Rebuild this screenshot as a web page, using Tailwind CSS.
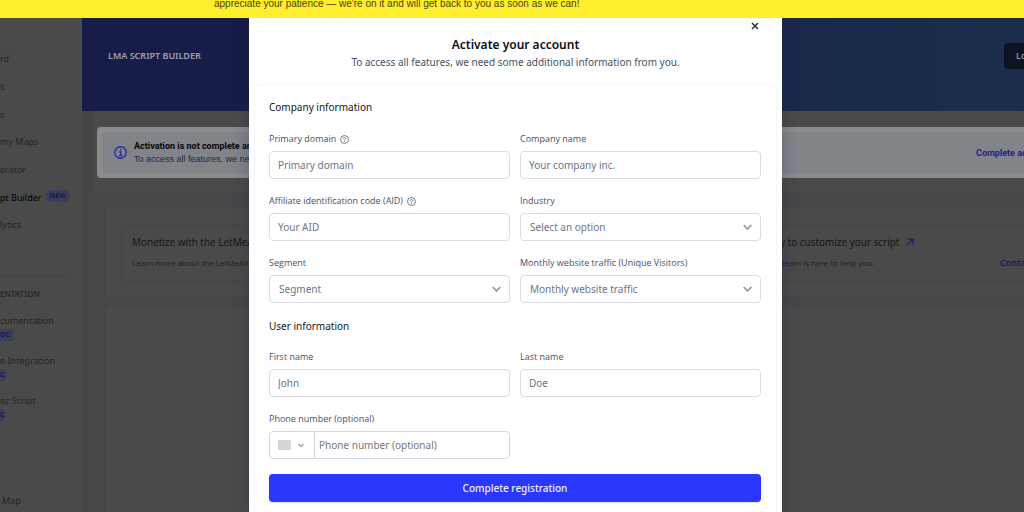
<!DOCTYPE html>
<html lang="en">
<head>
    <meta charset="UTF-8">
    <meta name="viewport" content="width=device-width, initial-scale=1.0">
    <title>LMA Script Builder</title>
    <script src="https://cdn.jsdelivr.net/npm/@tailwindcss/browser@4"></script>
</head>
<body class="h-screen overflow-hidden flex flex-col bg-[#464649] font-['Noto_Sans',sans-serif] text-[10px] leading-[14px]">

<!-- Announcement banner -->
<div class="h-[18px] shrink-0 flex items-end bg-[#ffee2b] pl-[214px] pb-[6px] overflow-hidden">
    <p class="font-['Liberation_Sans',sans-serif] text-[10px] leading-4 text-[#47421c] whitespace-nowrap">appreciate your patience — we're on it and will get back to you as soon as we can!</p>
</div>

<!-- Dimmed page behind the dialog -->
<div class="flex flex-1 min-h-0 overflow-hidden">
    <!-- Sidebar -->
    <nav class="w-[82px] shrink-0 overflow-hidden bg-[#4a4a4a] pt-[27px] text-[9px] text-[#242628] whitespace-nowrap">
        <a href="#" class="flex items-center h-7">rd</a>
        <a href="#" class="flex items-center h-7">s</a>
        <a href="#" class="flex items-center h-[27px]">s</a>
        <a href="#" class="flex items-center h-7">my Maps</a>
        <a href="#" class="flex items-center h-7">erator</a>
        <a href="#" class="flex items-center h-[27px] gap-1 text-black">pt Builder <span class="mb-1 px-1 rounded-full bg-[#3c3e55] text-[#14195e] text-[7px] leading-3 font-bold">NEW</span></a>
        <a href="#" class="flex items-center h-7">lytics</a>
        <hr class="mt-[37px] mr-4 border-[#434345]">
        <h2 class="mt-[10px] text-[8px] font-semibold">ENTATION</h2>
        <a href="#" class="block mt-[13px] h-10">cumentation
            <span class="block mt-px w-[14px] rounded-r bg-[#3c3e55] text-[#14195e] text-[7px] leading-3 font-bold">OC</span></a>
        <a href="#" class="block h-10">e Integration
            <span class="block mt-px w-[7px] rounded-r bg-[#3c3e55] text-[#14195e] text-[7px] leading-3 font-bold">C</span></a>
        <a href="#" class="block h-10">ez Script
            <span class="block mt-px w-[5px] rounded-r bg-[#3c3e55] text-[#14195e] text-[7px] leading-3 font-bold">C</span></a>
        <a href="#" class="block mt-[60px] pl-[2px]">Map</a>
    </nav>

    <main class="flex-1 min-w-0 flex flex-col overflow-hidden whitespace-nowrap font-['Open_Sans',sans-serif]">
        <header class="h-[93px] shrink-0 flex items-center justify-between pl-[26px] pb-[18px] bg-linear-to-r from-[#181c48] from-20% to-[#1b2e4b]">
            <h1 class="font-['Noto_Sans',sans-serif] text-[9px] font-semibold text-[#a0a0a8]">LMA SCRIPT BUILDER</h1>
            <button class="w-[60px] h-[26px] -mr-10 pl-3 rounded bg-[#0d1421] text-left text-[9px] font-semibold text-[#a0a0a8]">Log</button>
        </header>

        <!-- Activation notice -->
        <div class="h-[81px] shrink-0 ml-[13px] pl-[2px] py-4 bg-[#4a4a4a]">
            <section class="h-[51px] p-[5px] pr-0 rounded-l bg-[#8c8c8c] font-['Liberation_Sans',sans-serif]">
                <div class="h-[41px] flex items-center rounded-l bg-[#818489] pl-3">
                    <svg class="w-[13px] h-[13px] shrink-0" viewBox="0 0 13 13" fill="none" stroke="#262caf" stroke-width="1.4">
                        <circle cx="6.5" cy="6.5" r="5.7"/>
                        <path d="M5.2 6h1.5v3.4M5 9.5h3.2"/>
                        <path d="M6 3.8h1.3" stroke-width="1.5"/>
                    </svg>
                    <div class="flex-1 pl-[7px] leading-[13px] text-[9px]">
                        <p class="font-['Roboto',sans-serif] font-bold text-[#050508]">Activation is not complete and your</p>
                        <p class="text-[#252a4a]">To access all features, we need some</p>
                    </div>
                    <a href="#" class="w-12 font-['Roboto',sans-serif] font-bold text-[9px] text-[#1c2390]">Complete activation</a>
                </div>
            </section>
        </div>

        <!-- Help cards -->
        <section class="h-[88px] shrink-0 mt-4 ml-[25px] pt-4 pl-[14px] bg-[#4a4a4a]">
            <div class="h-[57px] flex justify-between rounded-l border border-r-0 border-[#454547] pl-[10px] pt-[9px]">
                <div>
                    <h2 class="text-[10px] leading-4 text-[#121316]">Monetize with the LetMeAllez</h2>
                    <p class="mt-[6px] text-[8px] text-[#202224]">Learn more about the LetMeAllez</p>
                </div>
                <div class="w-[244px]">
                    <h2 class="flex items-center gap-[7px] text-[10px] leading-4 text-[#121316]">y to customize your script
                        <svg class="w-2 h-2" viewBox="0 0 8 8" fill="none" stroke="#171c66" stroke-width="1.2"><path d="M.8 7.2 7 1M1.2 1H7v5.8"/></svg>
                    </h2>
                    <div class="mt-[6px] flex justify-between text-[8px]">
                        <p class="pl-[2px] text-[#202224]">team is here to help you.</p>
                        <a href="#" class="w-6 text-[9px] font-semibold text-[#14195e]">Contact</a>
                    </div>
                </div>
            </div>
        </section>
        <section class="flex-1 mt-[10px] ml-[25px] bg-[#4a4a4a]"></section>
    </main>
</div>

<!-- Activation dialog -->
<div class="absolute inset-x-0 top-[18px] bottom-0 pl-[7px] flex justify-center overflow-hidden">
    <div role="dialog" aria-labelledby="dialog-title" class="relative w-full max-w-[533px] self-start min-h-full px-[5px] bg-white shadow-[0_0_16px_rgba(30,30,80,0.3)]">
        <button aria-label="Close" class="absolute top-[4px] right-[23px] w-2 h-2">
            <svg viewBox="0 0 8 8" fill="none" stroke="#2b3346" stroke-width="1.6"><path d="m1 1 6 6M7 1 1 7"/></svg>
        </button>
        <div class="pt-[18px] h-[66px] text-center">
            <h2 id="dialog-title" class="text-[12px] leading-[18px] font-semibold text-[#0c0e12]">Activate your account</h2>
            <p class="text-[10px] leading-4 text-[#475067]">To access all features, we need some additional information from you.</p>
        </div>

        <form class="pl-[14px] pr-[15px] pt-[14px] pb-5 rounded-t-md border border-b-0 border-[#f6f6f8] text-[#475067]">
            <h3 class="leading-4 text-[#14161a]">Company information</h3>
            <div class="mt-[17px] grid grid-cols-2 gap-x-[10px] gap-y-[15px]">
                <div>
                    <label for="domain" class="flex items-center gap-1 mb-[5px] font-['Open_Sans',sans-serif] text-[9px] font-medium">Primary domain
                        <svg class="w-[9px] h-[9px]" viewBox="0 0 9 9" fill="none" stroke="#667085" stroke-width=".9"><circle cx="4.5" cy="4.5" r="4"/><path d="M3.2 3.7c0-1.7 2.7-1.6 2.6 0 0 .9-1.3.9-1.3 1.8M4.5 6.2v.9"/></svg>
                    </label>
                    <input id="domain" type="text" placeholder="Primary domain" class="block w-full h-7 px-2 rounded border border-[#d9dce5] placeholder:text-[#6c7588]">
                </div>
                <div>
                    <label for="company" class="block mb-[5px] font-['Open_Sans',sans-serif] text-[9px] font-medium">Company name</label>
                    <input id="company" type="text" placeholder="Your company inc." class="block w-full h-7 px-2 rounded border border-[#d9dce5] placeholder:text-[#6c7588]">
                </div>
                <div>
                    <label for="aid" class="flex items-center gap-1 mb-[5px] font-['Open_Sans',sans-serif] text-[9px] font-medium">Affiliate identification code (AID)
                        <svg class="w-[9px] h-[9px]" viewBox="0 0 9 9" fill="none" stroke="#667085" stroke-width=".9"><circle cx="4.5" cy="4.5" r="4"/><path d="M3.2 3.7c0-1.7 2.7-1.6 2.6 0 0 .9-1.3.9-1.3 1.8M4.5 6.2v.9"/></svg>
                    </label>
                    <input id="aid" type="text" placeholder="Your AID" class="block w-full h-7 px-2 rounded border border-[#d9dce5] placeholder:text-[#6c7588]">
                </div>
                <div>
                    <label for="industry" class="block mb-[5px] font-['Open_Sans',sans-serif] text-[9px] font-medium">Industry</label>
                    <div class="relative">
                        <select id="industry" class="block appearance-none w-full h-7 px-[9px] rounded border border-[#d9dce5] text-[#6c7588]"><option>Select an option</option></select>
                        <svg class="absolute right-[9px] top-[11px] w-[9px] h-[7px] pointer-events-none" viewBox="0 0 9 7" fill="none" stroke="#999" stroke-width="1.8"><path d="m.7 1 3.8 4 3.8-4"/></svg>
                    </div>
                </div>
                <div>
                    <label for="segment" class="block mb-[5px] font-['Open_Sans',sans-serif] text-[9px] font-medium">Segment</label>
                    <div class="relative">
                        <select id="segment" class="block appearance-none w-full h-7 px-[9px] rounded border border-[#d9dce5] text-[#6c7588]"><option>Segment</option></select>
                        <svg class="absolute right-[9px] top-[11px] w-[9px] h-[7px] pointer-events-none" viewBox="0 0 9 7" fill="none" stroke="#999" stroke-width="1.8"><path d="m.7 1 3.8 4 3.8-4"/></svg>
                    </div>
                </div>
                <div>
                    <label for="traffic" class="block mb-[5px] font-['Open_Sans',sans-serif] text-[9px] font-medium">Monthly website traffic (Unique Visitors)</label>
                    <div class="relative">
                        <select id="traffic" class="block appearance-none w-full h-7 px-[9px] rounded border border-[#d9dce5] text-[#6c7588]"><option>Monthly website traffic</option></select>
                        <svg class="absolute right-[9px] top-[11px] w-[9px] h-[7px] pointer-events-none" viewBox="0 0 9 7" fill="none" stroke="#999" stroke-width="1.8"><path d="m.7 1 3.8 4 3.8-4"/></svg>
                    </div>
                </div>
            </div>

            <h3 class="mt-[15px] leading-4 text-[#14161a]">User information</h3>
            <div class="mt-4 grid grid-cols-2 gap-x-[10px] gap-y-[15px]">
                <div>
                    <label for="first" class="block mb-[5px] font-['Open_Sans',sans-serif] text-[9px] font-medium">First name</label>
                    <input id="first" type="text" placeholder="John" class="block w-full h-7 px-2 rounded border border-[#d9dce5] placeholder:text-[#6c7588]">
                </div>
                <div>
                    <label for="last" class="block mb-[5px] font-['Open_Sans',sans-serif] text-[9px] font-medium">Last name</label>
                    <input id="last" type="text" placeholder="Doe" class="block w-full h-7 px-2 rounded border border-[#d9dce5] placeholder:text-[#6c7588]">
                </div>
                <div>
                    <label for="phone" class="block mb-[5px] font-['Open_Sans',sans-serif] text-[9px] font-medium">Phone number (optional)</label>
                    <div class="flex h-7 rounded border border-[#d3d8e0]">
                        <button type="button" aria-label="Country" class="w-[45px] shrink-0 flex items-center gap-[7px] pl-2 border-r border-[#d3d8e0]">
                            <span class="w-[13px] h-[10px] bg-[#d5d6da]"></span>
                            <svg class="w-[6px] h-[5px]" viewBox="0 0 6 5" fill="none" stroke="#8f96a3" stroke-width="1.1"><path d="m.5 1 2.5 2.6L5.500 1"/></svg>
                        </button>
                        <input id="phone" type="tel" placeholder="Phone number (optional)" class="w-full min-w-0 px-1 placeholder:text-[#777]">
                    </div>
                </div>
            </div>
            <button type="submit" class="block w-full h-7 mt-[15px] rounded bg-[#2a37ff] font-medium text-[#eef0ff] shadow-sm">Complete registration</button>
        </form>
    </div>
</div>

</body>
</html>
